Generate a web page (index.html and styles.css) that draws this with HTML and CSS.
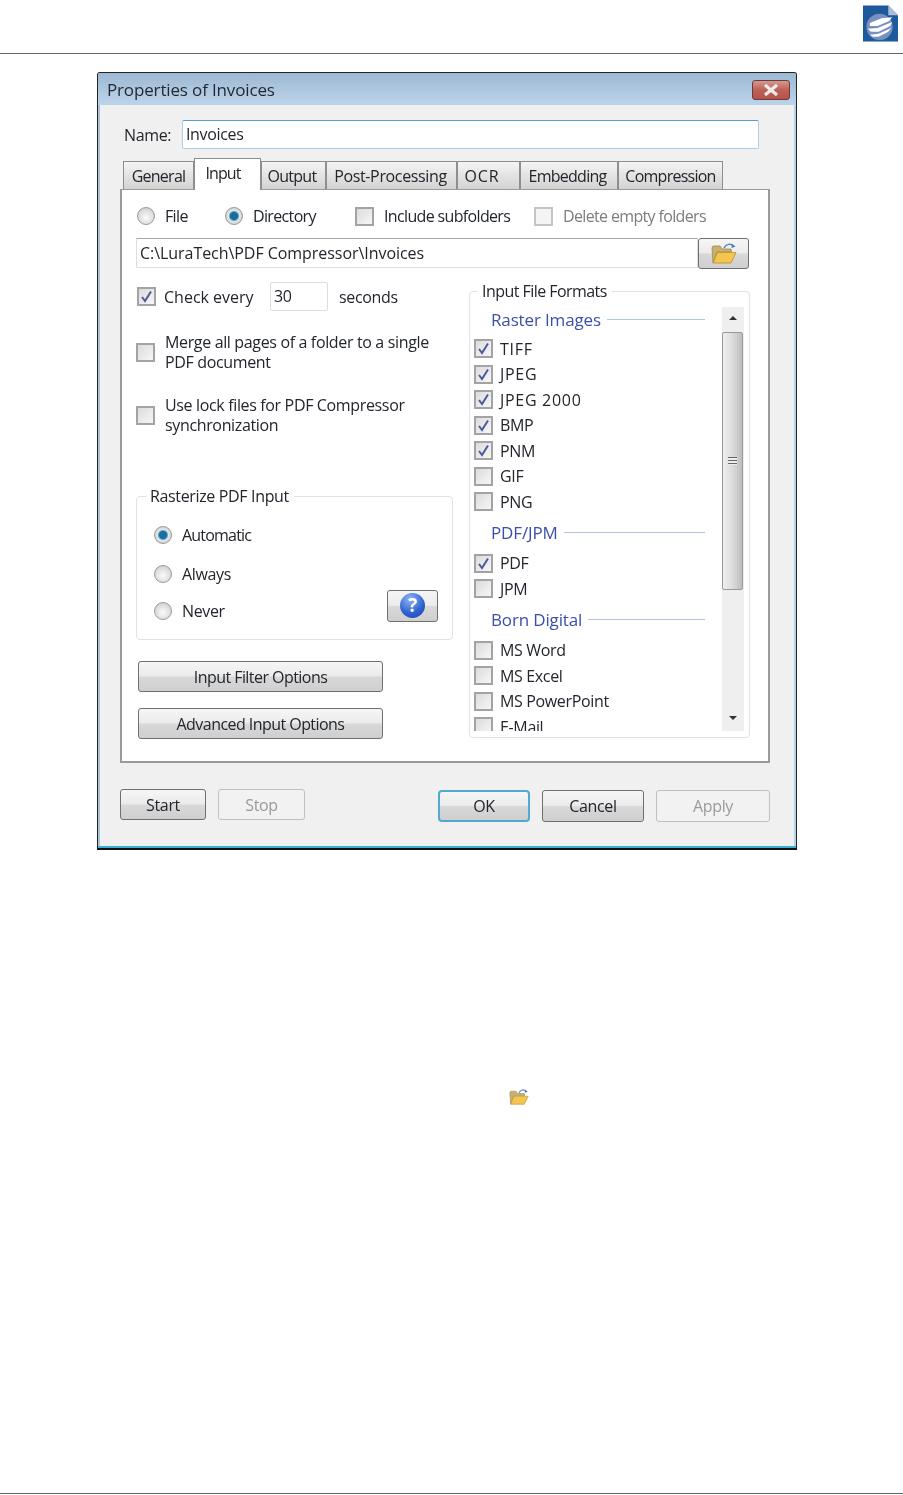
FILE: index.html
```html
<!DOCTYPE html>
<html>
<head>
	<meta charset="utf-8">
	<title>Properties of Invoices</title>
	<link rel="stylesheet" href="styles.css">
</head>
<body>
	<svg class="defs" width="0" height="0">
		<symbol id="tick" viewBox="0 0 15 15">
			<path d="M3 8 L6 12 L12 2.5" fill="none" stroke="#4a5a9c" stroke-width="2"/>
		</symbol>
		<symbol id="folder" viewBox="0 0 26 21">
			<path d="M13 5 C15 1 20 0 22 3" fill="none" stroke="#5b83b5" stroke-width="1.5"/>
			<path d="M21 1 L24.5 3.5 L20.5 5 Z" fill="#3f78c0"/>
			<path d="M2 20 L1 5 L2 3 L9 3 L11 6 L20 6 L20.5 9 L6 9 Z" fill="#c9b070" stroke="#a08a50" stroke-width="0.8"/>
			<path d="M2 20 L6.5 9.5 L25 9.5 L20 20 Z" fill="#f4c64e" stroke="#b8902c" stroke-width="0.8"/>
		</symbol>
	</svg>

	<header class="top">
		<svg class="logo" viewBox="0 0 36 37">
			<path d="M0 0 H26 L36 10 V37 H0 Z" fill="#1d5a9b"/>
			<path d="M26 0 L36 10 H26 Z" fill="#a9bdd8"/>
			<circle cx="17" cy="22" r="13.5" fill="#7890c0"/>
			<path d="M7 18 L19 13 L30 12 L27 16 L15 21 L7 21 Z" fill="#fff"/>
			<path d="M5 24 L15 23 L30 17 L28 21 L16 27 L8 27 Z" fill="#fff"/>
			<path d="M7 30 L16 29 L29 23 L26 27 L16 32 L10 32 Z" fill="#fff"/>
		</svg>
	</header>

	<div class="dialog">
		<div class="titlebar">
			<span class="title">Properties of Invoices</span>
			<span class="close">
				<svg viewBox="0 0 18 12" width="18" height="12"><path d="M3 1 L15 11 M15 1 L3 11" stroke="#eee" stroke-width="3.2"/></svg>
			</span>
		</div>

		<div class="client">
			<div class="name-row">
				<label class="name-label">Name:</label>
				<div class="name-input">Invoices</div>
			</div>

			<div class="tabs">
				<div class="tab">General</div>
				<div class="tab active">Input</div>
				<div class="tab shifted">Output</div>
				<div class="tab post">Post-Processing</div>
				<div class="tab ocr">OCR</div>
				<div class="tab shifted">Embedding</div>
				<div class="tab">Compression</div>
			</div>

			<div class="panel">
				<div class="source-row">
					<div class="opt"><span class="radio"></span><span>File</span></div>
					<div class="opt"><span class="radio on"></span><span>Directory</span></div>
					<div class="opt"><span class="cb"></span><span>Include subfolders</span></div>
					<div class="opt off"><span class="cb dis"></span><span>Delete empty folders</span></div>
				</div>

				<div class="path-row">
					<div class="path-input">C:\LuraTech\PDF Compressor\Invoices</div>
					<button class="btn browse"><svg width="26" height="21"><use href="#folder"/></svg></button>
				</div>

				<div class="main">
					<div class="left">
						<div class="check-row">
							<span class="cb"><svg><use href="#tick"/></svg></span>
							<span class="check-label">Check every</span>
							<span class="num-input">30</span>
							<span>seconds</span>
						</div>
						<div class="wrap-opt merge">
							<span class="cb"></span>
							<span>Merge all pages of a folder to a single PDF document</span>
						</div>
						<div class="wrap-opt lock">
							<span class="cb"></span>
							<span>Use lock files for PDF Compressor synchronization</span>
						</div>

						<fieldset class="group raster">
							<legend>Rasterize PDF Input</legend>
							<div class="opt r1"><span class="radio on"></span><span>Automatic</span></div>
							<div class="opt r2"><span class="radio"></span><span>Always</span></div>
							<div class="opt r3">
								<span class="radio"></span><span>Never</span>
								<button class="btn help"><span class="help-icon">?</span></button>
							</div>
						</fieldset>

						<button class="btn wide first">Input Filter Options</button>
						<button class="btn wide">Advanced Input Options</button>
					</div>

					<fieldset class="group formats">
						<legend>Input File Formats</legend>
						<div class="list-wrap">
							<div class="list">
								<div class="sec-head"><span>Raster Images</span></div>
								<div class="item spaced"><span class="cb"><svg><use href="#tick"/></svg></span>TIFF</div>
								<div class="item spaced"><span class="cb"><svg><use href="#tick"/></svg></span>JPEG</div>
								<div class="item spaced"><span class="cb"><svg><use href="#tick"/></svg></span>JPEG 2000</div>
								<div class="item"><span class="cb"><svg><use href="#tick"/></svg></span>BMP</div>
								<div class="item"><span class="cb"><svg><use href="#tick"/></svg></span>PNM</div>
								<div class="item"><span class="cb"></span>GIF</div>
								<div class="item"><span class="cb"></span>PNG</div>
								<div class="sec-head"><span>PDF/JPM</span></div>
								<div class="item"><span class="cb"><svg><use href="#tick"/></svg></span>PDF</div>
								<div class="item"><span class="cb"></span>JPM</div>
								<div class="sec-head"><span>Born Digital</span></div>
								<div class="item"><span class="cb"></span>MS Word</div>
								<div class="item"><span class="cb"></span>MS Excel</div>
								<div class="item"><span class="cb"></span>MS PowerPoint</div>
								<div class="item"><span class="cb"></span>E-Mail</div>
							</div>
							<div class="scrollbar">
								<div class="arrow up"></div>
								<div class="thumb"><span class="grip"></span></div>
								<div class="arrow down"></div>
							</div>
						</div>
					</fieldset>
				</div>
			</div>

			<div class="actions">
				<button class="btn start">Start</button>
				<button class="btn stop" disabled>Stop</button>
				<button class="btn ok">OK</button>
				<button class="btn cancel">Cancel</button>
				<button class="btn apply" disabled>Apply</button>
			</div>
		</div>
	</div>

	<div class="inline-icon"><svg width="20" height="16"><use href="#folder"/></svg></div>
	<div class="bottom-rule"></div>
</body>
</html>
```

FILE: styles.css
```css
html, body {
	margin: 0;
	background: #fff;
}
body {
	display: flex;
	flex-direction: column;
	height: 1495px;
	overflow: hidden;
	font-family: "Open Sans", sans-serif;
	font-size: 16px;
	letter-spacing: -0.35px;
	color: #22262c;
}
.defs {
	position: absolute;
}
button {
	font: inherit;
	letter-spacing: inherit;
	color: inherit;
	padding: 0;
}

.top {
	display: flex;
	justify-content: flex-end;
	flex: none;
	height: 53px;
	padding-right: 5px;
	border-bottom: 1px solid #666;
	box-sizing: content-box;
}
.logo {
	width: 35px;
	height: 37px;
	margin-top: 5px;
}

.dialog {
	flex: none;
	width: 700px;
	height: 778px;
	margin: 18px 0 0 97px;
	box-sizing: border-box;
	border: 1px solid #222;
	border-bottom: 2px solid #111;
	border-radius: 3px 3px 0 0;
	background: #f0f0f0;
	box-shadow: inset 0 -2px 0 #39b0d8, inset 2px 0 0 #a9c4dc, inset -2px 0 0 #b5d3e8;
	filter: blur(0.35px);
}
.titlebar {
	display: flex;
	align-items: center;
	justify-content: space-between;
	height: 32px;
	padding: 0 6px 0 9px;
	background: linear-gradient(#9db8d2, #bcd4ea);
	border-radius: 2px 2px 0 0;
}
.title {
	font-size: 17px;
	letter-spacing: -0.15px;
	color: #1e2733;
}
.close {
	display: flex;
	align-items: center;
	justify-content: center;
	width: 38px;
	height: 20px;
	margin-top: 2px;
	box-sizing: border-box;
	border: 1px solid #6d3a36;
	border-radius: 3px;
	background: linear-gradient(#d3988f, #bf6156 50%, #b3524a);
}

.client {
	padding: 15px 25px 0 22px;
}
.name-row {
	display: flex;
	align-items: center;
	height: 29px;
}
.name-label {
	width: 58px;
	margin-left: 4px;
}
.name-input {
	width: 577px;
	height: 29px;
	box-sizing: border-box;
	padding-left: 3px;
	line-height: 27px;
	background: #fff;
	border: 1px solid #a9cfe9;
	border-top-color: #5b9bc9;
	border-radius: 2px;
}

.tabs {
	display: grid;
	grid-template-columns: 71px 67px 65px 131px 63px 98px 105px;
	width: 600px;
	height: 29px;
	margin: 11px 0 0 3px;
	letter-spacing: -0.75px;
}
.tab {
	height: 28px;
	margin-top: 1px;
	box-sizing: border-box;
	padding-top: 3px;
	text-align: center;
	border: 1px solid #8e8e8e;
	border-bottom: 0;
	background: linear-gradient(#f5f5f5, #e3e3e3 50%, #d3d3d3);
}
.tab.shifted {
	padding-right: 3px;
}
.tab.post {
	padding-right: 2px;
	letter-spacing: -0.35px;
}
.tab.ocr {
	padding-right: 13px;
	letter-spacing: 0.9px;
}
.tab.active {
	position: relative;
	z-index: 1;
	height: 32px;
	margin-top: -2px;
	padding: 3px 9px 0 0;
	background: #fff;
	letter-spacing: -0.9px;
}

.panel {
	width: 650px;
	height: 574px;
	box-sizing: border-box;
	padding: 16px 17px 0 15px;
	background: #fff;
	border: 1px solid #9a9a9a;
	border-width: 1px 2px 2px 2px;
}
.opt {
	display: flex;
	align-items: center;
	gap: 10px;
	height: 20px;
}
.off {
	color: #7c7c7c;
}
.source-row {
	display: grid;
	grid-template-columns: 88px 130px 179px 1fr;
	letter-spacing: -0.65px;
}

.radio {
	flex: none;
	width: 18px;
	height: 18px;
	box-sizing: border-box;
	border: 1px solid #9a9a9a;
	border-radius: 50%;
	background: radial-gradient(circle at 50% 60%, #fbfbfb, #dcdcdc 60%, #c4c4c4);
}
.radio.on {
	background: radial-gradient(circle, #1d6d9c 0 3.5px, #4fa8d4 4.5px, #e6e6e6 5.5px, #bdbdbd);
}
.cb {
	flex: none;
	display: block;
	width: 19px;
	height: 19px;
	box-sizing: border-box;
	border: 2px solid #a3a3a3;
	background: linear-gradient(135deg, #dcdcdc, #f6f6f6);
}
.cb svg {
	display: block;
	width: 15px;
	height: 15px;
}
.cb.dis {
	border-color: #c4c4c4;
	background: #f4f4f4;
}

.path-row {
	display: flex;
	margin: 12px 0 0 -1px;
}
.path-input {
	width: 562px;
	height: 30px;
	box-sizing: border-box;
	padding-left: 3px;
	line-height: 28px;
	letter-spacing: -0.05px;
	border: 1px solid #dcdfe3;
	border-top-color: #a8a8a8;
	background: #fff;
}
.btn {
	display: flex;
	align-items: center;
	justify-content: center;
	box-sizing: border-box;
	border: 1px solid #6f6f6f;
	border-radius: 3px;
	background: linear-gradient(#f6f6f6, #ebebeb 48%, #d8d8d8 52%, #cfcfcf);
}
.btn:disabled {
	border-color: #c0c0c0;
	background: #f2f2f2;
	color: #9a9a9a;
}
.browse {
	width: 51px;
	height: 31px;
}

.main {
	display: flex;
	gap: 16px;
	margin: 13px 0 0 -1px;
}
.left {
	flex: none;
	width: 317px;
}
.check-row {
	display: flex;
	align-items: center;
	height: 29px;
}
.check-row .cb {
	margin-left: 1px;
}
.check-label {
	width: 106px;
	margin-left: 8px;
	letter-spacing: 0;
}
.num-input {
	width: 58px;
	height: 29px;
	margin-right: 11px;
	box-sizing: border-box;
	padding-left: 3px;
	line-height: 27px;
	border: 1px solid #dcdcdc;
	border-radius: 2px;
}
.wrap-opt {
	display: flex;
	align-items: center;
	gap: 10px;
	width: 300px;
	line-height: 20px;
}
.merge {
	margin-top: 21px;
}
.lock {
	margin-top: 23px;
}

.group {
	margin: 0;
	box-sizing: border-box;
	border: 1px solid #dde3ea;
	border-radius: 4px;
}
.group legend {
	padding: 0 5px 0 4px;
	line-height: 20px;
}
.raster {
	width: 317px;
	height: 154px;
	margin-top: 51px;
	padding: 19px 14px 0 17px;
}
.raster legend {
	margin-left: -8px;
}
.r1 {
	letter-spacing: -0.8px;
}
.r2 {
	margin-top: 19px;
}
.r3 {
	margin-top: 17px;
}
.help {
	width: 51px;
	height: 32px;
	margin: -11px 0 0 auto;
}
.help-icon {
	display: block;
	width: 25px;
	height: 25px;
	border-radius: 50%;
	background: radial-gradient(circle at 40% 25%, #8fb6f2, #2c5fd0 60%, #1c3fa8);
	color: #fff;
	font-weight: 700;
	font-size: 19px;
	line-height: 25px;
	text-align: center;
}
.wide {
	width: 245px;
	height: 31px;
	margin: 16px 0 0 2px;
	letter-spacing: -0.55px;
}
.wide.first {
	margin-top: 21px;
}

.formats {
	flex: none;
	width: 281px;
	height: 457px;
	margin-top: -1px;
	padding: 6px 5px 0 4px;
}
.formats legend {
	margin-left: 4px;
	letter-spacing: -0.55px;
}
.list-wrap {
	display: flex;
	height: 424px;
}
.list {
	flex: 1;
	margin-top: -1px;
	overflow: hidden;
	padding-right: 17px;
}
.sec-head {
	display: flex;
	align-items: center;
	gap: 6px;
	height: 26px;
	margin: 5px 0 5px 17px;
	color: #3c4fa8;
	font-size: 17px;
	letter-spacing: -0.15px;
}
.sec-head:first-child {
	margin-top: 0;
	margin-bottom: 4px;
}
.sec-head::after {
	content: "";
	flex: 1;
	height: 1px;
	background: #b4c3e3;
}
.item {
	display: flex;
	align-items: center;
	gap: 7px;
	height: 25.5px;
}
.item.spaced {
	letter-spacing: 0.7px;
}
.scrollbar {
	flex: none;
	display: flex;
	flex-direction: column;
	width: 22px;
	background: #efefef;
}
.arrow {
	flex: none;
	width: 0;
	height: 0;
	margin-left: 7px;
	border-left: 4px solid transparent;
	border-right: 4px solid transparent;
}
.arrow.up {
	margin-top: 9px;
	margin-bottom: 12px;
	border-bottom: 4px solid #333;
}
.arrow.down {
	margin-top: auto;
	margin-bottom: 11px;
	border-top: 4px solid #333;
}
.thumb {
	display: flex;
	align-items: center;
	justify-content: center;
	flex: none;
	width: 21px;
	height: 258px;
	box-sizing: border-box;
	border: 1px solid #999;
	border-radius: 2px;
	background: linear-gradient(90deg, #efefef, #dcdcdc 50%, #bdbdbd);
}
.grip {
	width: 9px;
	height: 8px;
	background: repeating-linear-gradient(#666 0 1px, #eee 1px 3px);
}

.actions {
	display: flex;
	align-items: flex-start;
	gap: 12px;
	width: 650px;
	margin-top: 26px;
}
.start, .stop {
	height: 31px;
}
.start {
	width: 86px;
}
.stop {
	width: 87px;
}
.ok, .cancel, .apply {
	height: 32px;
	margin-top: 1px;
}
.ok {
	width: 92px;
	margin-left: auto;
	border: 2px solid #4fa8d6;
	border-radius: 4px;
}
.cancel {
	width: 102px;
}
.apply {
	width: 114px;
}

.inline-icon {
	flex: none;
	height: 16px;
	margin: 238px 0 0 509px;
}
.bottom-rule {
	flex: none;
	height: 1px;
	margin-top: auto;
	margin-bottom: 1px;
	background: #666;
}
```
